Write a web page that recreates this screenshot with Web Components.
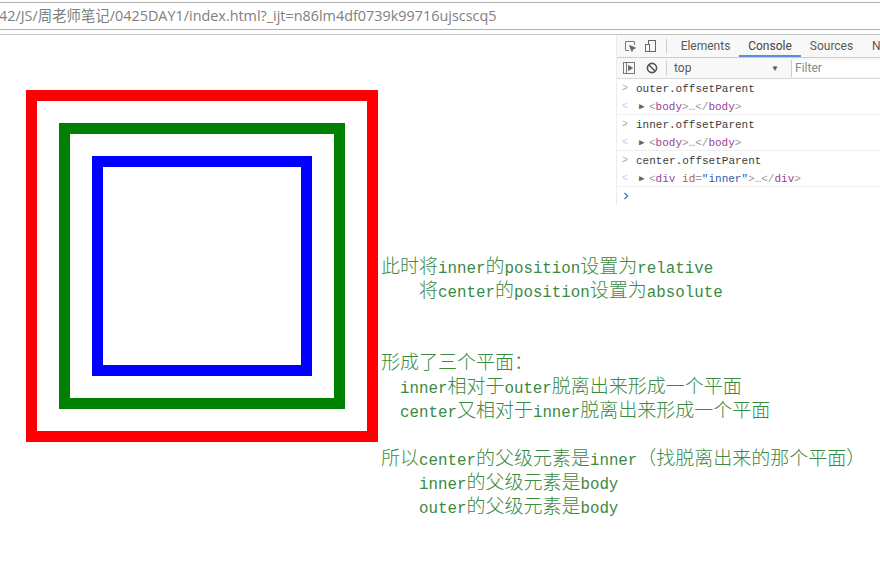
<!DOCTYPE html>
<html>
<head>
<meta charset="utf-8">
<title>offsetParent</title>
<style>
  html, body { margin: 0; height: 100%; background: #fff; overflow: hidden; }
</style>
</head>
<body>
<note-page>
  <address-bar slot="bar">42/JS/周老师笔记/0425DAY1/index.html?_ijt=n86lm4df0739k99716ujscscq5</address-bar>
  <nested-box slot="boxes" color="red"><nested-box color="green"><nested-box color="blue" inner></nested-box></nested-box></nested-box>
  <dev-tools slot="tools">
    <console-entry input="outer.offsetParent"><span class="t">&lt;</span><span class="p">body</span><span class="t">&gt;…&lt;/</span><span class="p">body</span><span class="t">&gt;</span></console-entry>
    <console-entry input="inner.offsetParent"><span class="t">&lt;</span><span class="p">body</span><span class="t">&gt;…&lt;/</span><span class="p">body</span><span class="t">&gt;</span></console-entry>
    <console-entry input="center.offsetParent"><span class="t">&lt;</span><span class="p">div</span> <span class="a">id</span><span class="t">=</span><span class="v">"inner"</span><span class="t">&gt;…&lt;/</span><span class="p">div</span><span class="t">&gt;</span></console-entry>
  </dev-tools>
  <note-text slot="notes">
    <note-line>此时将inner的position设置为relative</note-line>
    <note-line indent="4">将center的position设置为absolute</note-line>
    <note-line></note-line>
    <note-line></note-line>
    <note-line>形成了三个平面：</note-line>
    <note-line indent="2">inner相对于outer脱离出来形成一个平面</note-line>
    <note-line indent="2">center又相对于inner脱离出来形成一个平面</note-line>
    <note-line></note-line>
    <note-line>所以center的父级元素是inner（找脱离出来的那个平面）</note-line>
    <note-line indent="4">inner的父级元素是body</note-line>
    <note-line indent="4">outer的父级元素是body</note-line>
  </note-text>
</note-page>

<script>
const CJK = /([\u3000-\u9fff\uff00-\uffef]+)/;

class NotePage extends HTMLElement {
  constructor() {
    super();
    this.attachShadow({ mode: "open" });
    this.shadowRoot.innerHTML = `
      <style>
        :host { display: flex; flex-direction: column; width: 880px; height: 562px; }
        #main {
          flex: 1;
          display: grid;
          grid-template-columns: 26px 352px 3px 235px 264px;
          grid-template-rows: 218px 1fr;
        }
        #boxes { grid-column: 2; grid-row: 1 / 3; padding-top: 55px; }
        #tools { grid-column: 5; grid-row: 1; }
        #notes { grid-column: 4 / 6; grid-row: 2; }
      </style>
      <slot name="bar"></slot>
      <div id="main">
        <div id="boxes"><slot name="boxes"></slot></div>
        <div id="tools"><slot name="tools"></slot></div>
        <div id="notes"><slot name="notes"></slot></div>
      </div>
    `;
  }
}

class AddressBar extends HTMLElement {
  constructor() {
    super();
    this.attachShadow({ mode: "open" });
    this.shadowRoot.innerHTML = `
      <style>
        :host {
          display: block;
          height: 35px;
          box-sizing: border-box;
          padding-top: 2px;
          border-bottom: 1px solid #c4c4c4;
        }
        #field {
          height: 28px;
          box-sizing: border-box;
          border-top: 1px solid #b0b0b0;
          border-bottom: 1px solid #b0b0b0;
          font: 14.4px/26px "Open Sans", "Noto Sans CJK SC", sans-serif;
          color: #808080;
          white-space: nowrap;
          overflow: hidden;
        }
        #text { display: block; margin-left: -1px; }
      </style>
      <div id="field"><span id="text"><slot></slot></span></div>
    `;
  }
}

class NestedBox extends HTMLElement {
  constructor() {
    super();
    this.attachShadow({ mode: "open" });
    this.shadowRoot.innerHTML = `
      <style>
        :host {
          display: block;
          box-sizing: border-box;
          border: 11px solid var(--c);
          padding: 22px;
        }
        :host([inner]) { width: 220px; height: 220px; padding: 0; }
      </style>
      <slot></slot>
    `;
    this.style.setProperty("--c", this.getAttribute("color"));
  }
}

class DevTools extends HTMLElement {
  constructor() {
    super();
    this.attachShadow({ mode: "open" });
    this.shadowRoot.innerHTML = `
      <style>
        :host {
          display: block;
          font: 12px Roboto, "Liberation Sans", sans-serif;
          color: #5a5a5a;
          background: #fff;
          border-left: 1px solid #ececec;
          height: 170px;
          overflow: hidden;
        }
        #tabs {
          display: flex;
          align-items: center;
          height: 22px;
          background: #f8f8f8;
          border-bottom: 1px solid #ccc;
        }
        svg { display: block; flex: none; }
        .sep { width: 1px; height: 14px; background: #ccc; flex: none; }
        .tab { height: 22px; line-height: 22px; flex: none; box-sizing: border-box; text-align: center; }
        .on { color: #444; border-bottom: 2px solid #5a8fdb; }
        #bar {
          display: flex;
          align-items: center;
          height: 20px;
          background: #f8f8f8;
          border-bottom: 1px solid #d8d8d8;
        }
        #ctx { width: 97px; flex: none; }
        #caret { color: #555; font-size: 8px; width: 20px; flex: none; }
        #filter {
          flex: 1;
          height: 17px;
          line-height: 17px;
          padding-left: 3px;
          background: #fff;
          border-left: 1px solid #ccc;
          color: #888;
        }
        #prompt { padding: 5px 0 0 6px; }
      </style>
      <div id="tabs">
        <svg style="margin-left:7px" width="13" height="13" viewBox="0 0 13 13" fill="none" stroke="#777"><path d="M5 10.5H1.5v-9h9V5"/><path d="M5.5 5.5l6 2.5-2.5 1-1 2.5z" fill="#555"/></svg>
        <svg style="margin-left:7px" width="13" height="14" viewBox="0 0 13 14" fill="none" stroke="#666"><rect x="4.5" y="1.5" width="7" height="11"/><rect x="1.5" y="5.5" width="4" height="7" fill="#fff"/></svg>
        <span class="sep" style="margin:0 5px 0 9px"></span>
        <span class="tab" style="width:67px">Elements</span>
        <span class="tab on" style="width:62px">Console</span>
        <span class="tab" style="width:61px">Sources</span>
        <span class="tab" style="margin-left:10px">N</span>
      </div>
      <div id="bar">
        <svg style="margin-left:6px" width="12" height="12" viewBox="0 0 12 12" fill="none" stroke="#777"><rect x=".5" y=".5" width="11" height="11"/><path d="M3.5 1v10"/><path d="M5.5 3.5l4 2.5-4 2.5z" fill="#666"/></svg>
        <svg style="margin-left:11px" width="12" height="12" viewBox="0 0 12 12" fill="none" stroke="#555" stroke-width="1.6"><circle cx="6" cy="6" r="4.6"/><path d="M2.8 2.8l6.4 6.4"/></svg>
        <span class="sep" style="margin:0 7px 0 8px"></span>
        <span id="ctx">top</span>
        <span id="caret">▼</span>
        <span id="filter">Filter</span>
      </div>
      <slot></slot>
      <div id="prompt"><svg width="7" height="8" viewBox="0 0 7 8" fill="none" stroke="#4a7fd6" stroke-width="1.5"><path d="M1.5 1l3 3-3 3"/></svg></div>
    `;
  }
}

class ConsoleEntry extends HTMLElement {
  constructor() {
    super();
    this.attachShadow({ mode: "open" });
    this.shadowRoot.innerHTML = `
      <style>
        :host {
          display: block;
          height: 36px;
          box-sizing: border-box;
          padding-top: 1px;
          border-bottom: 1px solid #efefef;
          font: 11px/18px "Liberation Mono", monospace;
          color: #3c3c3c;
        }
        .row { display: flex; align-items: center; height: 18px; }
        .mark { width: 19px; padding-left: 5px; box-sizing: border-box; flex: none; color: #aaa; font-size: 10px; }
        .tri { width: 13px; padding-left: 3px; box-sizing: border-box; flex: none; color: #666; font-size: 9px; }
      </style>
      <div class="row"><span class="mark">&gt;</span><span id="input"></span></div>
      <div class="row"><span class="mark" style="color:#ccc">&lt;</span><span class="tri">▶</span><span id="output"></span></div>
    `;
    this.shadowRoot.getElementById("input").textContent = this.getAttribute("input");
  }

  connectedCallback() {
    const colors = { t: "#999", p: "#9a3f9a", a: "#a5682a", v: "#3458a8" };
    const out = this.shadowRoot.getElementById("output");
    for (const node of Array.from(this.childNodes)) {
      const copy = node.cloneNode(true);
      if (copy.style) copy.style.color = colors[copy.className];
      out.appendChild(copy);
    }
  }
}

class NoteText extends HTMLElement {
  constructor() {
    super();
    this.attachShadow({ mode: "open" });
    this.shadowRoot.innerHTML = `
      <style>
        :host { display: block; color: #3a8a42; }
      </style>
      <slot></slot>
    `;
  }
}

class NoteLine extends HTMLElement {
  constructor() {
    super();
    this.attachShadow({ mode: "open" });
  }

  connectedCallback() {
    const indent = Number(this.getAttribute("indent") || 0);
    const parts = this.textContent.split(CJK);
    const html = parts
      .map((part) => (CJK.test(part) ? `<span class="cjk">${part}</span>` : part))
      .join("");
    this.shadowRoot.innerHTML = `
      <style>
        :host {
          display: block;
          height: 24px;
          padding-left: ${indent * 9.5}px;
          font: 15.8px/24px "Liberation Mono", monospace;
          white-space: nowrap;
        }
        .cjk { display: inline-block; height: 24px; font: 300 19px/24px "Noto Sans CJK SC", sans-serif; }
      </style>
      ${html}
    `;
  }
}

customElements.define("note-page", NotePage);
customElements.define("address-bar", AddressBar);
customElements.define("nested-box", NestedBox);
customElements.define("dev-tools", DevTools);
customElements.define("console-entry", ConsoleEntry);
customElements.define("note-text", NoteText);
customElements.define("note-line", NoteLine);
</script>
</body>
</html>
